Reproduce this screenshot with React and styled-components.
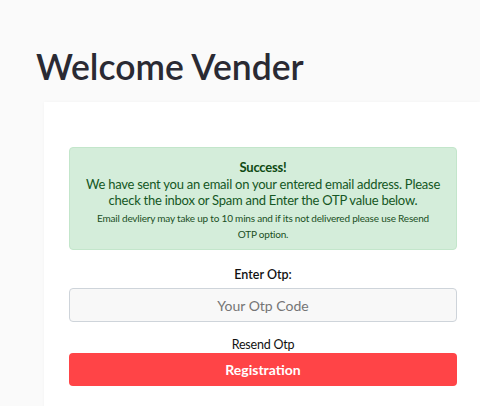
import React from 'react';
import styled, { createGlobalStyle } from 'styled-components';

const Global = createGlobalStyle`
  html, body {
    margin: 0;
    padding: 0;
    background: #fafafa;
    font-family: Lato, "Noto Sans", sans-serif;
    color: #212529;
  }
`;

const Page = styled.div`
  padding-top: 45px;
  overflow: hidden;
  height: 406px;
  box-sizing: border-box;
`;

const Title = styled.h1`
  margin: 0 0 14px 36px;
  font-size: 35.5px;
  font-weight: 600;
  line-height: 43px;
  color: #2a2a33;
`;

const Card = styled.section`
  margin-left: 44px;
  background: #fff;
  box-shadow: 0 0 3px rgba(0, 0, 0, 0.03);
  padding: 45px 0 40px 25px;
  min-height: 320px;
`;

const Form = styled.div`
  width: 388px;
  display: flex;
  flex-direction: column;
  align-items: stretch;
  text-align: center;
`;

const Alert = styled.div`
  background: #d4edda;
  border: 1px solid #c3e6cb;
  border-radius: 4px;
  color: #155724;
  padding: 11px 12px 7px;
`;

const AlertTitle = styled.div`
  font-weight: 700;
  font-size: 13px;
  letter-spacing: -0.2px;
  line-height: 17px;
  color: #0e4a12;
`;

const AlertText = styled.div`
  font-size: 13px;
  letter-spacing: -0.25px;
  line-height: 16px;
`;

const AlertSmall = styled.div`
  font-size: 10px;
  letter-spacing: -0.2px;
  line-height: 16px;
  margin-top: 2px;
  padding: 0 8px;
  color: #1a4f24;
`;

const Label = styled.label`
  display: block;
  margin-top: 17px;
  font-size: 12.5px;
  line-height: 16px;
  font-weight: 600;
  color: #111;
`;

const Input = styled.input`
  margin-top: 5px;
  height: 34px;
  box-sizing: border-box;
  border: 1px solid #ced4da;
  border-radius: 4px;
  background: #f8f8f8;
  font-family: inherit;
  font-size: 14px;
  text-align: center;
  color: #444;
  &::placeholder {
    color: #757575;
  }
`;

const Resend = styled.div`
  margin-top: 15px;
  font-size: 12.5px;
  letter-spacing: -0.2px;
  line-height: 16px;
  color: #111;
`;

const Button = styled.button`
  height: 33px;
  border: 0;
  border-radius: 4px;
  background: #ff4447;
  color: #fff;
  font-family: inherit;
  font-size: 14px;
  font-weight: 700;
`;

export default function App() {
  return (
    <Page>
      <Global />
      <Title>Welcome Vender</Title>
      <Card>
        <Form>
          <Alert>
            <AlertTitle>Success!</AlertTitle>
            <AlertText>
              We have sent you an email on your entered email address. Please check the inbox or Spam and Enter the OTP value below.
            </AlertText>
            <AlertSmall>
              Email devliery may take up to 10 mins and if its not delivered please use Resend OTP option.
            </AlertSmall>
          </Alert>
          <Label htmlFor="otp">Enter Otp:</Label>
          <Input id="otp" placeholder="Your Otp Code" />
          <Resend>Resend Otp</Resend>
          <Button>Registration</Button>
        </Form>
      </Card>
    </Page>
  );
}
